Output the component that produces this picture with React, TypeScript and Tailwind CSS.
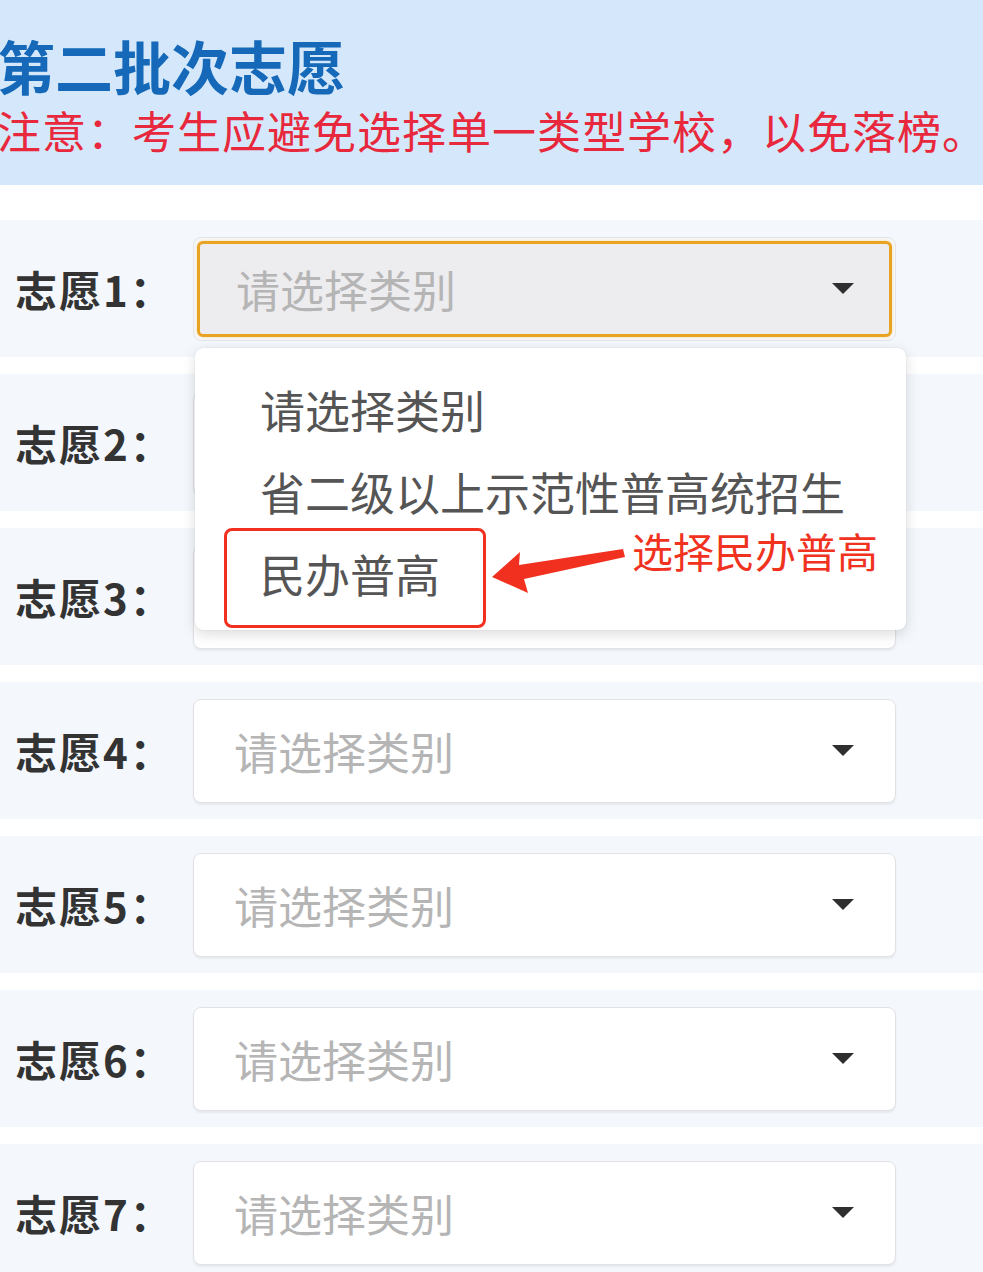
const rows = [1, 2, 3, 4, 5, 6, 7];

const Caret = () => (
  <svg width="24" height="13" viewBox="0 0 24 13">
    <path d="M1 1 L23 1 L12 12 Z" fill="#2f2f2f" />
  </svg>
);

const SelectBox = ({ focused }: { focused?: boolean }) => {
  if (focused) {
    return (
      <div className="h-[104px] w-[703px] rounded-lg border border-[#e4e4e6] bg-[#f7f7f9] p-[3px]">
        <div className="flex h-full items-center justify-between rounded-md border-[3px] border-[#e9a322] bg-[#edecef] pl-[36px] pr-[34px] shadow-[0_0_3px_#f5d9a0]">
          <span className="text-[44px] text-[#b5b5b5]">请选择类别</span>
          <Caret />
        </div>
      </div>
    );
  }
  return (
    <div className="flex h-[104px] w-[703px] items-center justify-between rounded-lg border border-[#e2e2e4] bg-white pl-[40px] pr-[40px] shadow-[0_2px_2px_rgba(0,0,0,0.06)]">
      <span className="text-[44px] text-[#b5b5b5]">请选择类别</span>
      <Caret />
    </div>
  );
};

export default function App() {
  return (
    <div className="min-h-[1272px] w-[983px] overflow-hidden bg-white font-['Noto_Sans_CJK_SC',sans-serif]">
      <div className="h-[185px] overflow-hidden bg-[#d5e8fb] pt-[30px]">
        <div className="-ml-[3px] text-[58px] font-bold leading-[70px] text-[#1569b8]">第二批次志愿</div>
        <div className="-ml-[3px] mt-[3px] whitespace-nowrap text-[44px] leading-[54px] tracking-[1px] text-[#e8283c]">
          注意：考生应避免选择单一类型学校，以免落榜。
        </div>
      </div>

      <div className="relative mt-[35px] flex flex-col gap-[17px]">
        {rows.map((n) => (
          <div key={n} className="flex h-[137px] items-center bg-[#f4f8fd]">
            <div className="w-[193px] pl-[15px] text-[42px] font-bold tracking-[2px] text-[#333333]">志愿{n}：</div>
            <SelectBox focused={n === 1} />
          </div>
        ))}

        {/* open dropdown */}
        <div className="absolute left-[195px] top-[128px] h-[282px] w-[711px] rounded-lg bg-white pt-[21px] pl-[65px] shadow-[0_4px_14px_rgba(0,0,0,0.14),0_0_1px_rgba(0,0,0,0.2)]">
          <div className="flex h-[82px] items-center text-[45px] text-[#555555]">请选择类别</div>
          <div className="flex h-[82px] items-center whitespace-nowrap text-[45px] text-[#555555]">省二级以上示范性普高统招生</div>
          <div className="flex h-[82px] items-center text-[45px] text-[#555555]">民办普高</div>
          <div className="absolute left-[29px] top-[180px] h-[100px] w-[262px] rounded-lg border-[3px] border-[#f2301f]" />
        </div>

        {/* annotation */}
        <svg className="absolute left-[480px] top-[320px]" width="150" height="60" viewBox="0 0 150 60">
          <path d="M12 37 L40 12 L39 25 L143 9 L145 17 L44 39 L48 53 Z" fill="#f2301f" />
        </svg>
        <div className="absolute left-[632px] top-[306px] whitespace-nowrap text-[41px] leading-[48px] text-[#f0321e]">
          选择民办普高
        </div>
      </div>
    </div>
  );
}
